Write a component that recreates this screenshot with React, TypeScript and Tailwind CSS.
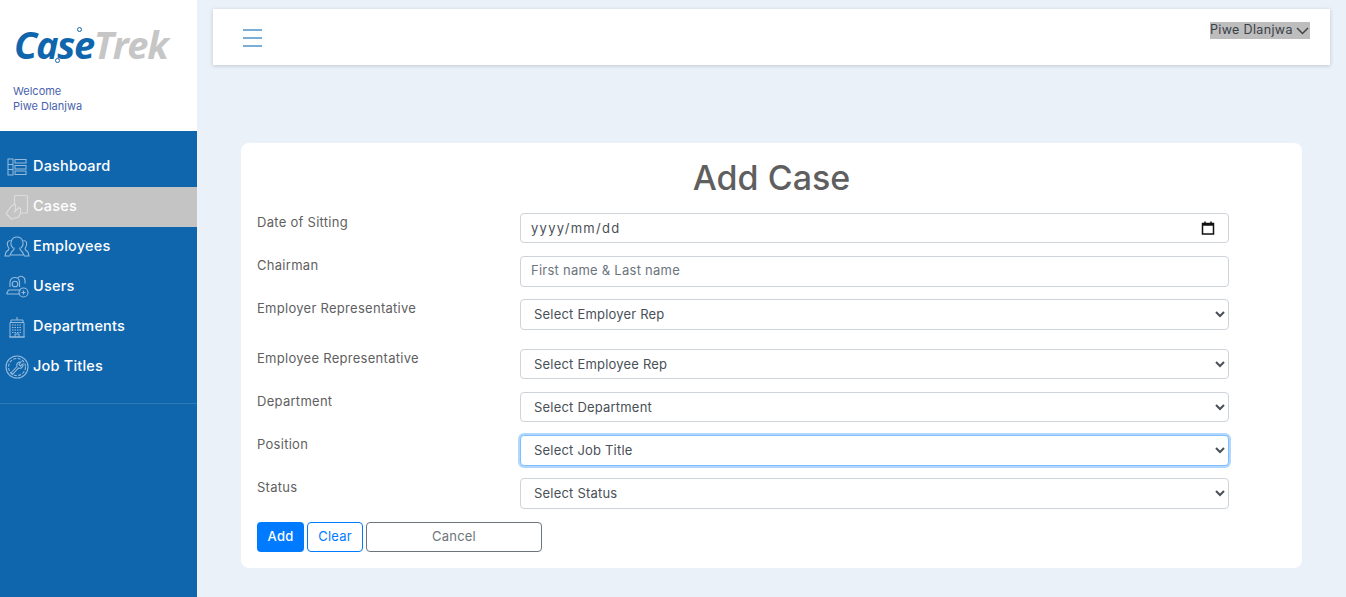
const FONT = "font-['Inter','Liberation_Sans',sans-serif]";

function DashboardIcon() {
  return (
    <svg width="20" height="18" viewBox="0 0 20 18" fill="none" stroke="currentColor" strokeWidth="1">
      <rect x="1" y="1" width="5" height="16" />
      <path d="M1 6.500h5M1 11.500h5" />
      <rect x="8" y="1.500" width="11" height="3.500" />
      <rect x="8" y="7.500" width="11" height="3.500" />
      <rect x="8" y="13" width="11" height="3.500" />
    </svg>
  );
}

function CasesIcon() {
  return (
    <svg width="24" height="26" viewBox="0 0 24 26" fill="none" stroke="currentColor" strokeWidth="1.200">
      <path d="M9.500 11V2.500a1 1 0 0 1 1-1h11a1 1 0 0 1 1 1V18a1 1 0 0 1-1 1H16" />
      <path d="M20 4h.5" />
      <path d="M1 19.500l5-7 3.500-2.500 1 1v5l-1.500 2.500" />
      <path d="M1 19.500l5.500 5.500 7-2 2-4v-4.500l-1.500-1-4 4" />
    </svg>
  );
}

function EmployeesIcon() {
  return (
    <svg width="26" height="22" viewBox="0 0 26 22" fill="none" stroke="currentColor" strokeWidth="1.100">
      <path d="M9 12c-2-2-2.500-5-1.500-7.500C8.500 2 11 1 13 1s4.500 1 5.500 3.500c1 2.500.5 5.500-1.500 7.500" />
      <path d="M10 11.500c.5 2-.5 3-2 4l-2 3.500h14l-2-3.500c-1.500-1-2.500-2-2-4" />
      <path d="M6.500 4.500C4 4.500 3 6.500 3.500 9c.2 1.500 1 2.500 1.500 3.500 0 1.500-1.500 2.500-3 3.500L1 20h5" />
      <path d="M19.500 4.500C22 4.500 23 6.500 22.500 9c-.2 1.500-1 2.500-1.500 3.500 0 1.500 1.500 2.500 3 3.500l1 4h-5" />
    </svg>
  );
}

function UsersIcon() {
  return (
    <svg width="24" height="24" viewBox="0 0 24 24" fill="none" stroke="currentColor" strokeWidth="1.100">
      <path d="M5 12V7.500C5 4 7.500 2.500 10 2.500s4.500 1.500 4.500 5V12" />
      <path d="M13 3c1-1.500 2.500-2 4-1.500s3 2 3 4v3" />
      <circle cx="10" cy="9" r="2.800" />
      <path d="M3.500 15h12.500M1.500 19l2-4M1.500 19h13" />
      <circle cx="18.500" cy="17.500" r="4.500" />
      <path d="M16.500 17.500h4M18.500 15.500v4" />
    </svg>
  );
}

function DepartmentsIcon() {
  return (
    <svg width="18" height="22" viewBox="0 0 18 22" fill="none" stroke="currentColor" strokeWidth="1">
      <path d="M2 6.500h14V21H2zM1 21h16M3 6.500V4h12v2.500M9 4V1" />
      <path d="M4 9h10M4 11.500h10M4 14h10M4 16.500h10" strokeDasharray="1.500 1" />
      <path d="M7 21v-3h4v3" />
    </svg>
  );
}

function JobTitlesIcon() {
  return (
    <svg width="24" height="24" viewBox="0 0 24 24" fill="none" stroke="currentColor" strokeWidth="1.100">
      <circle cx="12" cy="12" r="11" />
      <circle cx="12" cy="12" r="8.500" strokeDasharray="3 1.500" />
      <path d="M6 18l6-6.500c-1-2.500 1-5 4-4.500l-2 2.500 1.500 1.500 2.500-2c.5 3-2 5-4.500 4L7.500 19.500z" />
    </svg>
  );
}

const NAV = [
  { label: "Dashboard", icon: DashboardIcon },
  { label: "Cases", icon: CasesIcon, active: true },
  { label: "Employees", icon: EmployeesIcon },
  { label: "Users", icon: UsersIcon },
  { label: "Departments", icon: DepartmentsIcon },
  { label: "Job Titles", icon: JobTitlesIcon },
];

const selectClass =
  "w-full h-full rounded-[4px] border bg-white pl-[9px] pb-px text-[13px] tracking-[0.2px] text-[#495057] outline-none";

function Field({ label, className, children }: { label: string; className: string; children: React.ReactNode }) {
  return (
    <div className={`flex ${className}`}>
      <label className="w-[263px] shrink-0 -mt-px text-[13px] leading-[20px] tracking-[0.28px] text-[#5f5f5f]">{label}</label>
      <div className="w-[709px] h-full">{children}</div>
    </div>
  );
}

function Logo() {
  return (
    <div className="relative h-[44px] w-[160px] ml-[14px] -mt-[2px] flex items-center font-['Open_Sans',sans-serif] italic font-bold text-[38px] leading-none tracking-[-1.300px]">
      <span className="text-[#1066ad]">Case</span>
      <span className="text-[#c6c6c6]">Trek</span>
      <span className="absolute left-[63px] top-[5px] size-[5px] rounded-full border border-[#1066ad] bg-white" />
      <span className="absolute left-[41px] top-[36px] size-[5px] rounded-full border border-[#1066ad] bg-white" />
    </div>
  );
}

export default function App() {
  return (
    <div className={`flex h-screen overflow-hidden bg-[#eaf1f9] ${FONT}`}>
      <aside className="w-[197px] shrink-0 flex flex-col bg-[#1066ad]">
        <div className="h-[131px] bg-white pt-[24px]">
          <Logo />
          <div className="mt-[18px] pl-[13px] text-[11px] leading-[15px] text-[#4a62ad]">
            <p>Welcome</p>
            <p>Piwe Dlanjwa</p>
          </div>
        </div>

        <nav className="mt-[16px] pb-[16px] border-b border-[#2f79b5]">
          {NAV.map(item => {
            const Icon = item.icon;
            return (
              <div
                key={item.label}
                className={`relative flex h-[40px] items-center pl-[33px] pb-[2px] text-[14.500px] tracking-[0.2px] font-medium text-white ${item.active ? "bg-[#c4c4c4]" : ""}`}
              >
                <span className={`absolute left-[17px] top-1/2 -translate-x-1/2 -translate-y-1/2 ${item.active ? "text-[#dcdcdc]" : "text-[#94bbdd]"}`}>
                  <Icon />
                </span>
                {item.label}
              </div>
            );
          })}
        </nav>
      </aside>

      <main className="flex-1 pl-[16px] pr-[16px] pt-[9px]">
        <header className="flex h-[56px] items-start justify-between bg-white pl-[30px] pr-[20px] shadow-[0_1px_4px_rgba(0,0,0,0.18)]">
          <div className="mt-[20px] flex w-[19px] flex-col gap-[6px]">
            <span className="h-[2px] bg-[#7badd9]" />
            <span className="h-[2px] bg-[#7badd9]" />
            <span className="h-[2px] bg-[#7badd9]" />
          </div>
          <div className="mt-[13px] flex h-[17px] w-[100px] items-center gap-[3px] bg-[#bdbdbd] text-[12.500px] tracking-[0.35px] text-[#3a3f47]">
            <span className="whitespace-nowrap">Piwe Dlanjwa</span>
            <svg width="13" height="8" viewBox="0 0 13 8" fill="none" stroke="#444" strokeWidth="1.500">
              <path d="M1 1l5.500 5.500L12 1" />
            </svg>
          </div>
        </header>

        <section className="ml-[28px] mt-[78px] h-[425px] w-[1061px] rounded-[8px] bg-white pl-[16px]">
          <h1 className="pt-[13px] pr-[16px] text-center text-[34px] font-medium leading-[44px] text-[#5f5f5f]">Add Case</h1>

          <div className="mt-[13px] flex flex-col">
            <Field label="Date of Sitting" className="h-[30px]">
              <div className="flex h-full items-center justify-between rounded-[4px] border border-[#ced4da] pl-[10px] pr-[13px] text-[13px] text-[#495057]">
                <span className="tracking-[1.300px] pt-px">yyyy/mm/dd</span>
                <svg width="14" height="14" viewBox="0 0 14 14" fill="none" stroke="#111">
                  <rect x="1.500" y="2.500" width="11" height="10.500" strokeWidth="1.500" />
                  <path d="M1 3.500h12" strokeWidth="2.500" />
                  <path d="M4 0.500v2M10 0.500v2" strokeWidth="1.500" />
                </svg>
              </div>
            </Field>
            <Field label="Chairman" className="mt-[13px] h-[31px]">
              <input
                readOnly
                placeholder="First name & Last name"
                className="h-full w-full rounded-[4px] border border-[#ced4da] px-[10px] pb-[3px] text-[13px] tracking-[0.25px] outline-none placeholder:text-[#6c757d]"
              />
            </Field>
            <Field label="Employer Representative" className="mt-[12px] h-[31px]">
              <select className={`${selectClass} border-[#ced4da]`}><option>Select Employer Rep</option></select>
            </Field>
            <Field label="Employee Representative" className="mt-[19px] h-[30px]">
              <select className={`${selectClass} border-[#ced4da]`}><option>Select Employee Rep</option></select>
            </Field>
            <Field label="Department" className="mt-[13px] h-[30px]">
              <select className={`${selectClass} border-[#ced4da]`}><option>Select Department</option></select>
            </Field>
            <Field label="Position" className="mt-[13px] h-[31px]">
              <select className={`${selectClass} border-[#80bdff] shadow-[0_0_0_2px_rgba(0,123,255,0.3)]`}><option>Select Job Title</option></select>
            </Field>
            <Field label="Status" className="mt-[12px] h-[31px]">
              <select className={`${selectClass} border-[#ced4da]`}><option>Select Status</option></select>
            </Field>
          </div>

          <div className="mt-[13px] flex gap-[3px] text-[13px] tracking-[0.2px]">
            <button className="h-[30px] w-[47px] rounded-[4px] bg-[#007bff] font-medium text-white">Add</button>
            <button className="h-[30px] w-[56px] rounded-[4px] border border-[#007bff] text-[#007bff]">Clear</button>
            <button className="h-[30px] w-[176px] rounded-[4px] border border-[#6c757d] text-[#6c757d]">Cancel</button>
          </div>
        </section>
      </main>
    </div>
  );
}
